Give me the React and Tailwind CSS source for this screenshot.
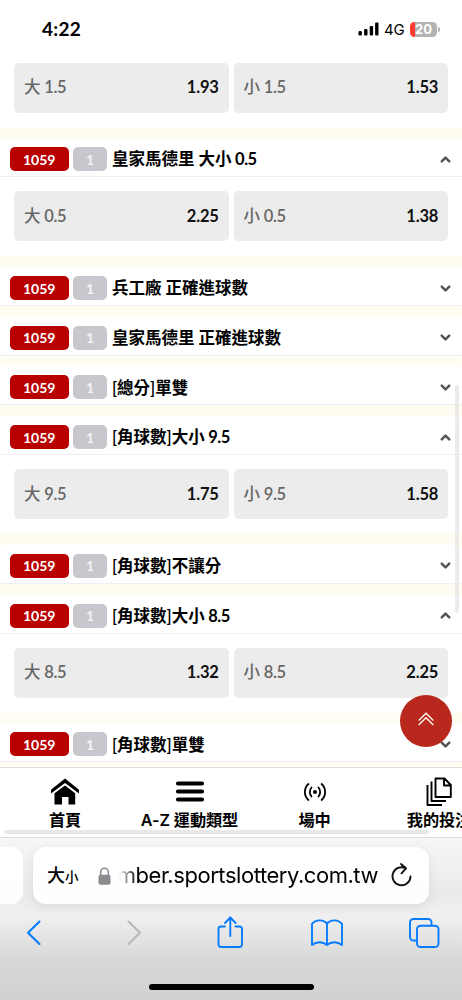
import { ChevronDown, ChevronUp } from 'lucide-react';

const markets = [
    { id: 1, title: '皇家馬德里 大小 0.5', options: [['大 0.5', '2.25'], ['小 0.5', '1.38']] },
    { id: 2, title: '兵工廠 正確進球數' },
    { id: 3, title: '皇家馬德里 正確進球數' },
    { id: 4, title: '[總分]單雙' },
    { id: 5, title: '[角球數]大小 9.5', options: [['大 9.5', '1.75'], ['小 9.5', '1.58']] },
    { id: 6, title: '[角球數]不讓分' },
    { id: 7, title: '[角球數]大小 8.5', options: [['大 8.5', '1.32'], ['小 8.5', '2.25']] },
    { id: 8, title: '[角球數]單雙' }
];

// Latin digits need their own weight beside the Chinese glyphs
const MixedText = ({ text, cjkClass, latinClass }) => (
    <>
        {text.split(/([ \d.]+$)/).map((part, idx) => (
            <span key={idx} className={idx % 2 ? latinClass : cjkClass}>{part}</span>
        ))}
    </>
);

const StatusBar = () => (
    <div className="flex h-[48.5px] shrink-0 items-start justify-between pl-[42px] pr-[22px] pt-[17px]">
        <span className="text-[19px] font-bold leading-[24px] tracking-[0.3px] text-black">4:22</span>
        <div className="flex h-[24px] items-center">
            <svg width="21" height="14" viewBox="0 0 21 14" fill="#000">
                <rect x="0.5" y="9" width="3.4" height="4.5" rx="1" />
                <rect x="6.1" y="7" width="3.4" height="6.5" rx="1" />
                <rect x="11.7" y="4" width="3.4" height="9.5" rx="1" />
                <rect x="17.1" y="0.5" width="3.4" height="13" rx="1" />
            </svg>
            <span className="ml-[5px] w-[26px] pt-px font-['Inter',sans-serif] text-[15px] leading-[24px] tracking-[-0.3px] text-black">4G</span>
            <div className="flex h-[15px] w-[27px] items-center justify-center rounded-[4.5px] bg-[linear-gradient(90deg,#ff3b30_20%,#b3b3b3_20%)] font-['Inter',sans-serif] text-[13px] font-bold leading-none text-white">
                20
            </div>
            <div className="ml-px h-[5px] w-[2px] rounded-r-full bg-[#b3b3b3]" />
        </div>
    </div>
);

const Options = ({ options }) => (
    <div className="flex gap-[5px] px-[14px] pb-[15.1px] pt-[14px]">
        {options.map(([label, odds]) => (
            <div key={label} className="flex h-[50px] flex-1 items-center justify-between rounded-[5px] bg-[#ececec] px-[10px] text-[16.5px]">
                <span className="whitespace-pre text-[#666]">
                    <MixedText text={label} cjkClass="font-medium" latinClass="font-semibold tracking-[-0.35px]" />
                </span>
                <span className="-mr-[0.2px] font-bold tracking-[-0.2px] text-[#111]">{odds}</span>
            </div>
        ))}
    </div>
);

const Market = ({ market }) => {
    const Chevron = market.options ? ChevronUp : ChevronDown;

    return (
        <div className="mb-[10.7px] shrink-0 rounded-[4px] bg-white">
            <div className="flex h-[39px] items-center border-b border-[#eeeef6] pl-[9.5px] pr-[9px] pt-[4px]">
                <span className="flex h-[24px] w-[59.5px] items-center justify-center rounded-[5px] bg-[#b80000] text-[14px] font-bold text-white">1059</span>
                <span className="ml-[4px] flex h-[24px] w-[34px] items-center justify-center rounded-[5px] bg-[#c8c7ce] text-[14px] font-bold text-[#f4f4f6]">1</span>
                <span className="ml-[5px] flex-1 whitespace-pre pt-px text-[16.5px] text-black">
                    <MixedText text={market.title} cjkClass="font-semibold" latinClass="font-bold tracking-[-0.5px]" />
                </span>
                <Chevron size={15} strokeWidth={4} color="#555" />
            </div>
            {market.options && <Options options={market.options} />}
        </div>
    );
};

const NavItem = ({ label, className, children }) => (
    <div className={`flex flex-col items-center ${className}`}>
        <div className="flex h-[36px] items-center">{children}</div>
        <span className="whitespace-nowrap font-['Inter','Noto_Sans_CJK_TC',sans-serif] text-[16.2px] font-semibold leading-[20px] tracking-[-0.1px] text-black">{label}</span>
    </div>
);

const BottomNav = () => (
    <div className="relative flex h-[71px] shrink-0 overflow-hidden border-b border-t border-[#dedede] bg-white pt-[6px]">
        <NavItem label="首頁" className="ml-[3px] w-[124px] shrink-0">
            <svg width="30" height="28" viewBox="0 0 30 28" fill="#000">
                <path d="M15 .5 29 11.700v3.900L15 4.900 1 15.600v-3.900z" />
                <path d="M15 7.500 25.200 15.300V26.500H18.500v-7.500h-6.500V26.500H4.500V15.300z" />
            </svg>
        </NavItem>
        <NavItem label="A-Z 運動類型" className="w-[125px] shrink-0">
            <svg width="30" height="24" viewBox="0 0 30 24" stroke="#000" strokeWidth="4.2" strokeLinecap="round">
                <path d="M3 3.500h24M3 11.500h24M3 19.500h24" />
            </svg>
        </NavItem>
        <NavItem label="場中" className="w-[125px] shrink-0">
            <svg width="24" height="20" viewBox="0 0 24 20" fill="none" stroke="#000" strokeWidth="1.8" strokeLinecap="round">
                <circle cx="12" cy="10" r="2" fill="#000" stroke="none" />
                <path d="M8.500 5.500C6.300 8 6.300 12 8.500 14.500M15.500 5.500C17.700 8 17.700 12 15.500 14.500M5.400 2C.7 6.200.7 13.800 5.400 18M18.600 2C23.300 6.200 23.300 13.800 18.600 18" />
            </svg>
        </NavItem>
        <NavItem label="我的投注" className="w-[124px] shrink-0">
            <svg width="28" height="30" viewBox="0 0 28 30" fill="none" stroke="#000" strokeWidth="1.9" strokeLinejoin="round">
                <path d="M10.500 1.500h9l6.300 6.500v12H10.500zM19 2V8.500h6.500" />
                <path d="M6.500 4.500v19.500H21M2.500 8v20H17" />
            </svg>
        </NavItem>
        <div className="absolute bottom-[3px] left-[4px] h-[4px] w-[425px] rounded-full bg-[#e8e8e8]" />
    </div>
);

const AddressBar = () => (
    <div className="flex h-[57px] gap-[10px]">
        <div className="w-[23px] rounded-r-[12px] bg-white/95" />
        <div className="flex w-[396px] items-center rounded-[13px] bg-white/95 pl-[14px] pr-[16px] text-black shadow-[0_3px_12px_rgba(0,0,0,0.08)]">
            <span className="flex w-[51px] items-baseline font-medium">
                <span className="text-[18px]">大</span>
                <span className="text-[13.5px]">小</span>
            </span>
            <svg width="13" height="18" viewBox="0 0 13 18" fill="none">
                <path d="M2.700 9V5a3.800 3.800 0 0 1 7.600 0v4" stroke="#8c8c90" strokeWidth="1.6" />
                <rect x="0.5" y="7.7" width="12" height="10" rx="2" fill="#8c8c90" />
            </svg>
            <span className="ml-[8px] flex w-[259px] justify-end overflow-hidden whitespace-nowrap font-['Inter',sans-serif] text-[22px] tracking-[-0.45px] [mask-image:linear-gradient(90deg,transparent,#000_18px)]">
                mber.sportslottery.com.tw
            </span>
            <svg className="ml-[13px] shrink-0" width="22" height="26" viewBox="0 0 22 26" fill="none" stroke="#111" strokeWidth="1.9" strokeLinecap="round" strokeLinejoin="round">
                <path d="M19.500 13.500A9 9 0 1 1 14.500 5.200M10 1l5 4.300-4.500 5" />
            </svg>
        </div>
    </div>
);

const Toolbar = () => (
    <div className="flex h-[58px] items-center pl-[26px] text-[#087cff]">
        <svg width="16" height="26" viewBox="0 0 16 26" fill="none" stroke="currentColor" strokeWidth="2.1" strokeLinecap="round" strokeLinejoin="round">
            <path d="M13.500 1.500 2 12.800 13.500 24" />
        </svg>
        <svg className="ml-[84px] text-[#b9b9bb]" width="16" height="26" viewBox="0 0 16 26" fill="none" stroke="currentColor" strokeWidth="2.1" strokeLinecap="round" strokeLinejoin="round">
            <path d="M2.500 1.500 14 12.800 2.500 24" />
        </svg>
        <svg className="ml-[74px]" width="28" height="34" viewBox="0 0 28 34" fill="none" stroke="currentColor" strokeWidth="1.9" strokeLinecap="round" strokeLinejoin="round">
            <path d="M9 10.500H5A2.500 2.500 0 0 0 2.500 13V28.500a2.500 2.500 0 0 0 2.500 2.500h18.500A2.500 2.500 0 0 0 26 28.500V13A2.500 2.500 0 0 0 23.500 10.500H19.500M14.300 20V1.500M9 7 14.300 1.500 19.600 7" />
        </svg>
        <svg className="ml-[67px]" width="32" height="28" viewBox="0 0 32 28" fill="none" stroke="currentColor" strokeWidth="1.9" strokeLinejoin="round">
            <path d="M16 4.800C12-.2 4.500.8 1 4.800V26c4.500-3.700 11-3.700 15 0V4.800ZM16 4.800C20-.2 27.500.8 31 4.800V26c-4.500-3.700-11-3.700-15 0" />
        </svg>
        <svg className="ml-[65px]" width="32" height="32" viewBox="0 0 32 32" fill="none" stroke="currentColor" strokeWidth="1.9">
            <path d="M8.500 23.500H5.500A3.500 3.500 0 0 1 2 20V5.500A3.500 3.500 0 0 1 5.500 2H20a3.500 3.500 0 0 1 3.500 3.500v3" />
            <rect x="9" y="8.700" width="21.500" height="21.300" rx="3.500" />
        </svg>
    </div>
);

const App = () => (
    <div className="relative flex h-[1000px] w-[462px] flex-col overflow-hidden bg-white font-['Lato','Noto_Sans_CJK_TC',sans-serif]">
        <StatusBar />
        <div className="flex h-[718.5px] shrink-0 flex-col overflow-hidden bg-[#fffcf2]">
            <div className="mb-[10.7px] shrink-0 rounded-b-[4px] bg-white">
                <Options options={[['大 1.5', '1.93'], ['小 1.5', '1.53']]} />
            </div>
            {markets.map(market => (
                <Market key={market.id} market={market} />
            ))}
        </div>
        <BottomNav />
        <div className="flex flex-1 flex-col bg-[linear-gradient(180deg,#f6f6f6_0%,#eaeaea_35%,#f0f0f0_48%,#d8d8d8_75%,#d1d1d1_100%)] pt-[9px]">
            <AddressBar />
            <Toolbar />
            <div className="mx-auto mt-[22px] h-[6px] w-[165px] rounded-full bg-black" />
        </div>

        <div className="absolute left-[455px] top-[385px] h-[228px] w-[4px] rounded-full bg-[#ebebeb]" />
        <div className="absolute left-[400px] top-[695px] flex size-[52px] items-center justify-center rounded-full bg-[#b8281c]">
            <svg className="-mt-[5px]" width="16" height="14" viewBox="0 0 16 14" fill="none" stroke="#fff" strokeWidth="1.3">
                <path d="M.7 8.500 8 1.200l7.300 7.300M.7 13 8 5.700l7.300 7.300" />
            </svg>
        </div>
    </div>
);

export default App;
